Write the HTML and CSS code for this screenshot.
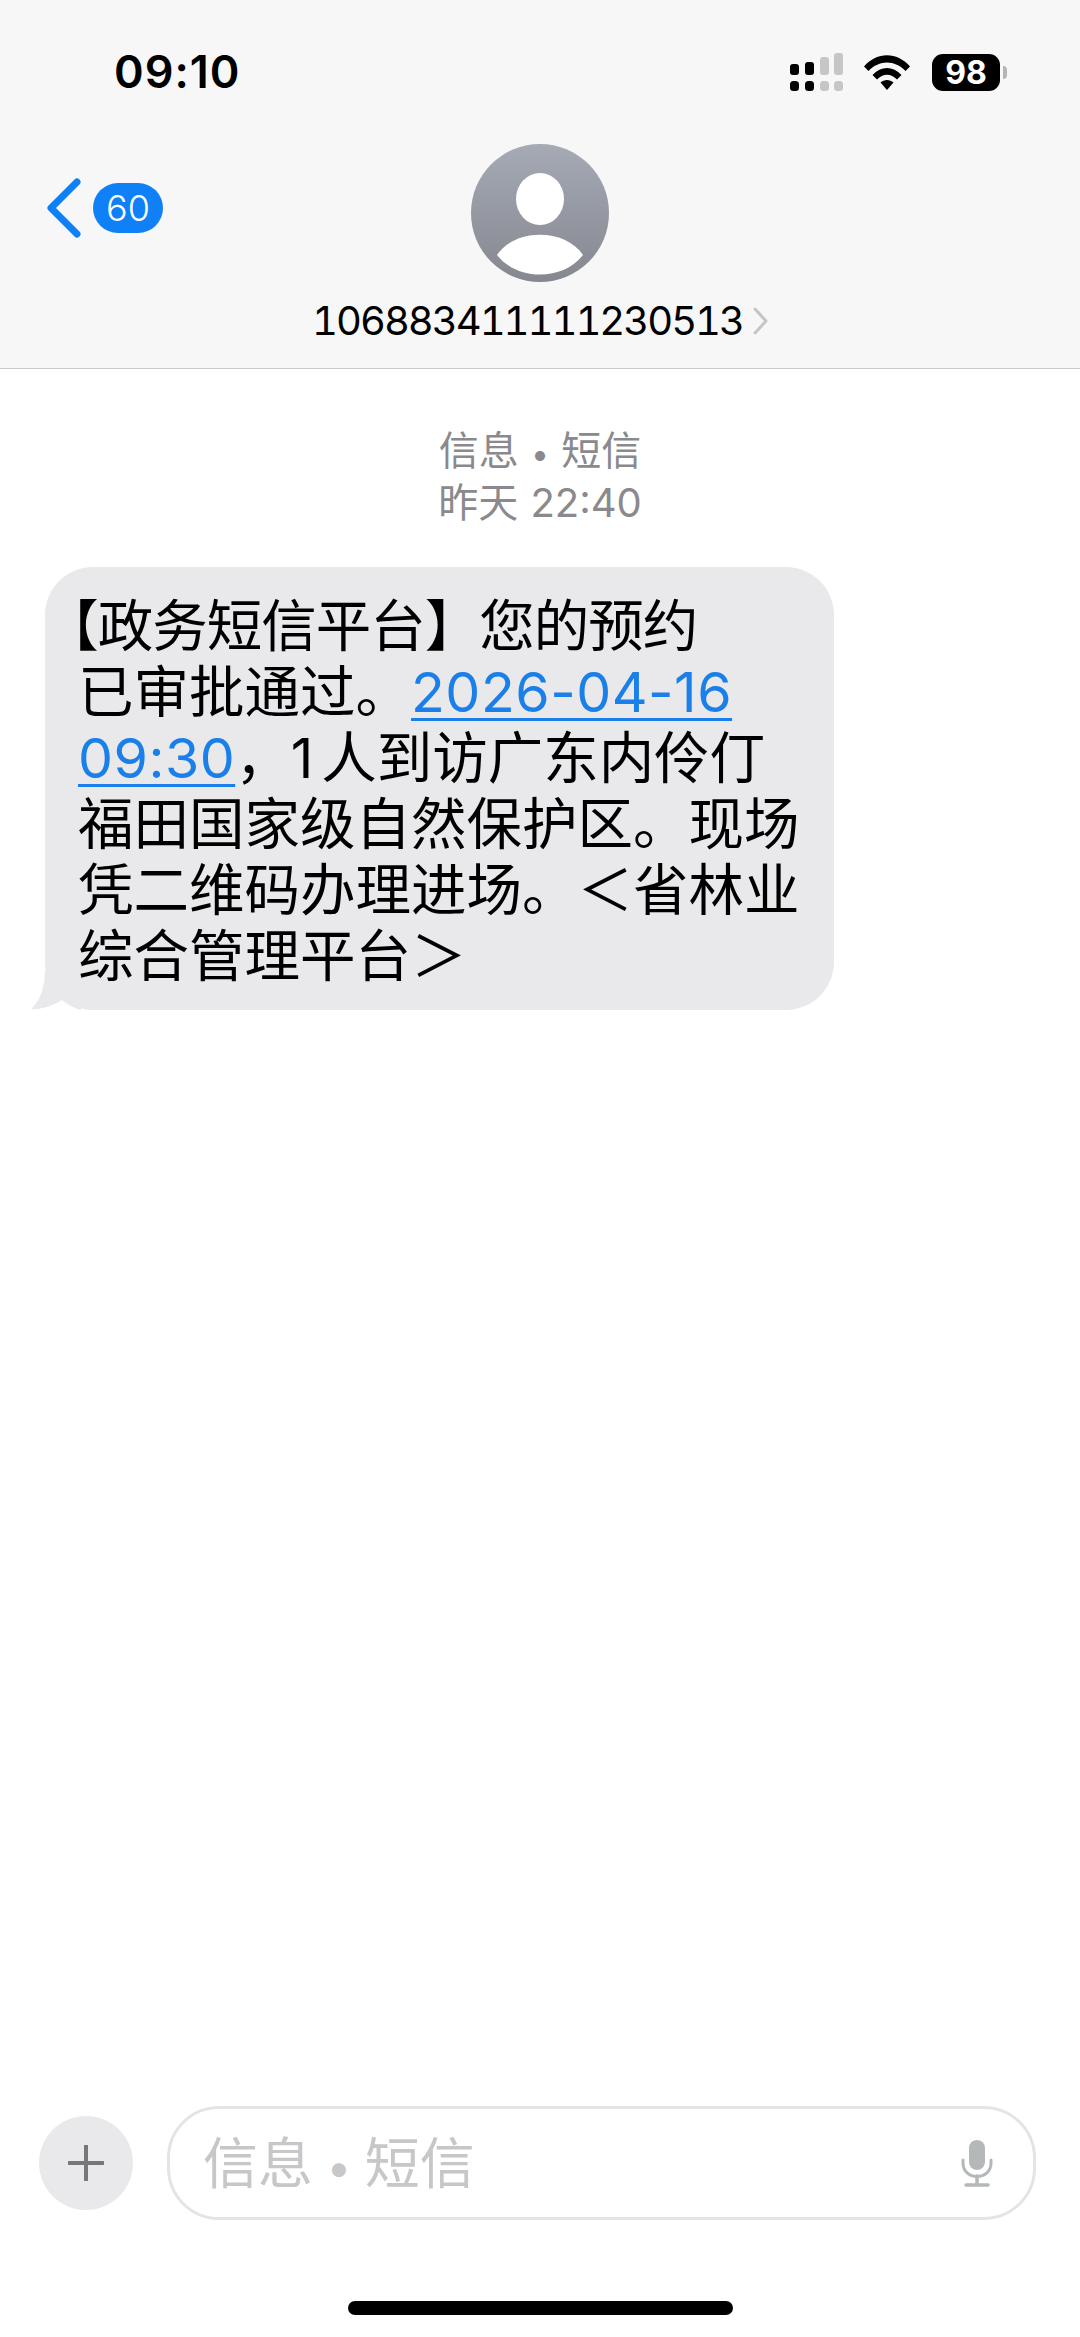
FILE: index.html
```html
<!DOCTYPE html>
<html lang="zh-CN">
<head>
    <meta charset="UTF-8">
    <meta name="viewport" content="width=device-width, initial-scale=1.0">
    <title>信息</title>
    <link rel="stylesheet" href="styles.css">
</head>
<body>
    <div class="phone">
        <header class="header">
            <div class="status-bar">
                <span class="time">09:10</span>
                <div class="status-icons">
                    <svg class="signal" width="53" height="38" viewBox="0 0 53 38">
                        <rect x="0" y="11" width="9" height="11" rx="3"/>
                        <rect x="15" y="9" width="9" height="13" rx="3"/>
                        <rect x="0" y="28" width="9" height="10" rx="3.5"/>
                        <rect x="15" y="28" width="9" height="10" rx="3.5"/>
                        <g fill="#c6c6c6">
                            <rect x="30" y="4" width="9" height="18" rx="3"/>
                            <rect x="44" y="0" width="9" height="22" rx="3"/>
                            <rect x="30" y="28" width="9" height="10" rx="3.5"/>
                            <rect x="44" y="28" width="9" height="10" rx="3.5"/>
                        </g>
                    </svg>
                    <svg class="wifi" width="46" height="35" viewBox="0 0 46 35">
                        <path d="M0 11.500C13 -3.500 33 -3.500 46 11.500L41.500 16C31 4.500 15 4.500 4.500 16Z"/>
                        <path d="M8.500 20C17 10.500 29 10.500 37.500 20L33 24.500C27 18 19 18 13 24.500Z"/>
                        <path d="M16.500 27.500C20 24 26 24 29.500 27.500L23 35Z"/>
                    </svg>
                    <div class="battery">
                        <span class="battery-level">98</span>
                        <span class="battery-nub"></span>
                    </div>
                </div>
            </div>
            <div class="nav">
                <div class="back">
                    <svg width="36" height="60" viewBox="0 0 36 60">
                        <path d="M31 4 L5 30 L31 56" fill="none" stroke="#0f80f6" stroke-width="7" stroke-linecap="round" stroke-linejoin="round"/>
                    </svg>
                    <span class="badge">60</span>
                </div>
                <div class="contact">
                    <svg class="avatar" width="138" height="138" viewBox="0 0 138 138">
                        <defs>
                            <linearGradient id="avatarFill" x1="0" y1="0" x2="0" y2="1">
                                <stop offset="0" stop-color="#a5aab5"/>
                                <stop offset="1" stop-color="#868890"/>
                            </linearGradient>
                        </defs>
                        <circle cx="69" cy="69" r="69" fill="url(#avatarFill)"/>
                        <ellipse cx="69" cy="55" rx="24" ry="26" fill="#fff"/>
                        <path d="M26 111 C44 84 94 84 112 111 C92 137 46 137 26 111Z" fill="#fff"/>
                    </svg>
                    <div class="contact-name">
                        <span>106883411111230513</span>
                        <svg width="15" height="28" viewBox="0 0 15 28">
                            <path d="M2 2 L13 14 L2 26" fill="none" stroke="#c5c5c7" stroke-width="3" stroke-linecap="round" stroke-linejoin="round"/>
                        </svg>
                    </div>
                </div>
            </div>
        </header>

        <main class="thread">
            <div class="meta">信息 <span class="dot">•</span> 短信<br>昨天 22:40</div>
            <div class="bubble">
                <svg class="tail" width="50" height="40" viewBox="0 0 50 40">
                    <path d="M14 0 C14 16 10 30 0 39 C10 39.500 22 36 31 30 C36 34 42 38 50 40 L50 0Z" fill="#e9e9eb"/>
                </svg>
                <p class="bubble-text"><span class="first-line"><span class="open-bracket">【</span>政务短信平台】您的预约</span><br>已审批通过。<a class="link" href="#">2026-04-16<br>09:30</a>，<span class="count">1</span>人到访广东内伶仃<br>福田国家级自然保护区。现场<br>凭二维码办理进场。＜省林业<br>综合管理平台＞</p>
            </div>
        </main>

        <footer class="composer">
            <div class="composer-row">
                <div class="plus">
                    <svg width="36" height="36" viewBox="0 0 36 36">
                        <path d="M18 1 V35 M1 18 H35" fill="none" stroke="#77777b" stroke-width="4" stroke-linecap="round"/>
                    </svg>
                </div>
                <div class="input">
                    <span class="placeholder">信息 <span class="dot">•</span> 短信</span>
                    <svg width="32" height="47" viewBox="0 0 32 47">
                        <rect x="8" y="0" width="16" height="30" rx="8" fill="#b4b8b9"/>
                        <path d="M2 20 V23 C2 41 30 41 30 23 V20" fill="none" stroke="#b4b8b9" stroke-width="3" stroke-linecap="round"/>
                        <path d="M16 36 V44 M5 45 H27" fill="none" stroke="#b4b8b9" stroke-width="3.500" stroke-linecap="round"/>
                    </svg>
                </div>
            </div>
            <div class="home-bar"></div>
        </footer>
    </div>
</body>
</html>
```

FILE: styles.css
```css
* {
    box-sizing: border-box;
}

body {
    margin: 0;
    background-color: #fff;
    font-family: 'Inter', 'Noto Sans CJK SC', sans-serif;
    color: #000;
}

.phone {
    display: flex;
    flex-direction: column;
    height: 2337px;
    overflow: hidden;
}

.header {
    height: 369px;
    flex-shrink: 0;
    background-color: #f7f7f7;
    border-bottom: 1px solid #c9c9c9;
}

.status-bar {
    display: flex;
    justify-content: space-between;
    align-items: center;
    padding: 53px 73px 0 114px;
    height: 91px;
}

.time {
    font-size: 45px;
    font-weight: 600;
    line-height: 38px;
    letter-spacing: 1px;
}

.status-icons {
    display: flex;
    align-items: center;
}

.wifi {
    margin-left: 21px;
}

.battery {
    display: flex;
    align-items: center;
    margin-left: 22px;
}

.battery-level {
    width: 68px;
    height: 37px;
    border-radius: 11px;
    background-color: #000;
    color: #fff;
    font-size: 32px;
    font-weight: 700;
    line-height: 37px;
    text-align: center;
}

.battery-nub {
    width: 4px;
    height: 13px;
    margin-left: 3px;
    border-radius: 0 4px 4px 0;
    background-color: #b5b5b5;
}

.nav {
    display: grid;
    grid-template-columns: 1fr auto 1fr;
    margin-top: 53px;
}

.back {
    display: flex;
    align-items: center;
    align-self: start;
    height: 60px;
    margin-top: 34px;
    padding-left: 46px;
}

.badge {
    width: 70px;
    height: 50px;
    margin-left: 11px;
    border-radius: 25px;
    background-color: #0f80f6;
    color: #fff;
    font-size: 36px;
    font-weight: 300;
    line-height: 50px;
    text-align: center;
}

.contact {
    display: flex;
    flex-direction: column;
    align-items: center;
}

.avatar {
    display: block;
}

.contact-name {
    display: flex;
    align-items: center;
    gap: 10px;
    margin-top: 16px;
    font-size: 40px;
    line-height: 46px;
    font-variant-numeric: tabular-nums;
    letter-spacing: -2px;
    white-space: nowrap;
}

.thread {
    flex: 1;
    padding: 56px 0 0 45px;
}

.meta {
    width: 990px;
    height: 104px;
    color: #8a8a8e;
    font-size: 40px;
    line-height: 52px;
    text-align: center;
    word-spacing: 1px;
}

.dot {
    font-size: 0.8em;
    line-height: 0;
}

.bubble {
    position: relative;
    width: 789px;
    height: 443px;
    margin-top: 38px;
    padding: 26px 20px 0 33px;
    border-radius: 48px;
    background-color: #e9e9eb;
}

.tail {
    position: absolute;
    left: -14px;
    bottom: 0;
}

.bubble-text {
    position: relative;
    margin: 0;
    font-size: 55.5px;
    line-height: 66px;
    white-space: nowrap;
}

.first-line {
    margin-left: -7px;
    letter-spacing: -1px;
}

.open-bracket {
    font-feature-settings: "halt";
}

.link {
    color: #1a7fe8;
    letter-spacing: 0.5px;
    text-decoration: underline;
    text-decoration-thickness: 3px;
    text-underline-offset: 6px;
}

.count {
    margin-right: 8px;
}

.composer {
    flex-shrink: 0;
    height: 231px;
}

.composer-row {
    display: flex;
    align-items: center;
    gap: 34px;
    padding-left: 39px;
}

.plus {
    display: flex;
    align-items: center;
    justify-content: center;
    width: 94px;
    height: 94px;
    border-radius: 50%;
    background-color: #e9e9eb;
}

.input {
    display: flex;
    align-items: center;
    justify-content: space-between;
    width: 869px;
    height: 114px;
    padding: 0 40px 0 33px;
    border: 3px solid #e4e4e6;
    border-radius: 52px;
}

.placeholder {
    color: #c7c7c9;
    font-size: 55px;
    line-height: 66px;
    word-spacing: -2px;
}

.home-bar {
    width: 385px;
    height: 14px;
    margin: 81px auto 0;
    border-radius: 7px;
    background-color: #000;
}
```
